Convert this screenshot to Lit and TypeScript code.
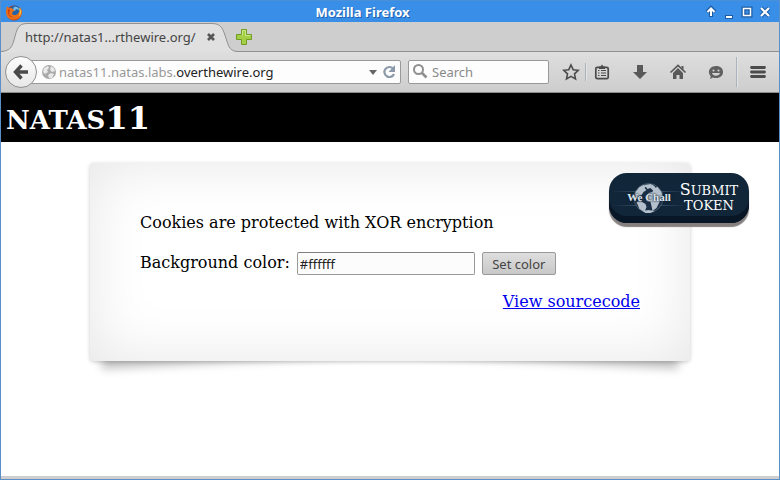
import { LitElement, html, css, svg } from "lit";
import { customElement, property } from "lit/decorators.js";

const globeLand = svg`
  <path d="M2 9 6 4l4-2 3 1-2 2 2 2-3 2-2 3-3 1-1 3-3-1zM3 19l4-1 5 3 1 3-2 5-5-3zM11 2l6-1 4 2 1 3-3 1-2-2-3 1zM20 5l4-1 4 5 1 5-2 1-1 4-3 6-4 3-1-5-1-4-4-1-1-4 3-4 4-1zM9 28l6-1 6 1-4 2h-5z"/>`;

const icons: Record<string, unknown> = {
  firefox: svg`
    <circle cx="9" cy="10" r="7.500" fill="#b8330f"/>
    <circle cx="10" cy="8.500" r="6" fill="#2463a6"/>
    <path d="M9 4c3-1 5 1 5 3l-3-1-1 2-2-1z" fill="#77bde9"/>
    <path d="M2 3l2 2.500c2-1 4 0 4 1l2 1-2 1-1 2c1 2 4 2 6 0 2-2 2-4.500 1-6.500 3 2 4 5.500 2 8.500-2 4-6 5-10 4C1 15 0 9 2 3z" fill="#e8701a"/>
    <path d="M14 4.500c3 3 2 7 0 9 1-3 1-6 0-9z" fill="#ffdc4b"/>
    <path d="M3 6l2 1-1 3c0 3 3 4 5 4-4 1-7-2-6-8z" fill="#d13c0c"/>`,
  shade: svg`<path d="M9 14V7M5 9l4-4 4 4" fill="none" stroke="#1c5ca6" stroke-width="4"/><path d="M9 13V7M5.500 9 9 5.500 12.500 9" fill="none" stroke="#fff" stroke-width="2"/>`,
  minimize: svg`<path d="M5 12h8v4H5z" fill="#1c5ca6"/><path d="M6 13h6v2H6z" fill="#fff"/>`,
  maximize: svg`<path d="M5.500 5.500h7v7h-7z" fill="none" stroke="#1c5ca6" stroke-width="4"/><path d="M5.500 5.500h7v7h-7z" fill="none" stroke="#fff" stroke-width="1.500"/>`,
  close: svg`<path d="M5 5l8 8M13 5l-8 8" stroke="#1c5ca6" stroke-width="4"/><path d="M5 5l8 8M13 5l-8 8" stroke="#fff" stroke-width="2.200"/>`,
  tabClose: svg`<path d="M6 6l6 6M12 6l-6 6" stroke="#555" stroke-width="2.600"/>`,
  plus: svg`<path d="M6.500 1.500h5v5h5v5h-5v5h-5v-5h-5v-5h5z" fill="#a4cf45" stroke="#6f9c24"/><path d="M7.500 7.500v-5h3v5h5" fill="none" stroke="#cbe88a"/>`,
  back: svg`<path d="M9.500 2.500 3.500 9l6 6.500M4 9h12" fill="none" stroke="#4a4a4a" stroke-width="3.400"/>`,
  world: svg`<circle cx="9" cy="9" r="7" fill="#aaa"/><path d="M4 5l4-2 1 2-2 2 1 2-3 2-2-2zM11 3l3 2 1 3-3 1-2-2zM8 12l3-2 3 1-2 4-3 0z" fill="#e9e9e9"/>`,
  drop: svg`<path d="M5 7h8l-4 5z" fill="#666"/>`,
  reload: svg`<path d="M13 5.500A5 5 0 1 0 14 11" fill="none" stroke="#8b99a8" stroke-width="2.200"/><path d="M15 2v7H8.500z" fill="#8b99a8"/>`,
  search: svg`<circle cx="6.500" cy="6.500" r="4.500" fill="none" stroke="#8f8f8f" stroke-width="2"/><path d="M10 10l4.500 4.500" stroke="#8f8f8f" stroke-width="2.600"/>`,
  star: svg`<path d="M9 2l2.200 4.700 5 .6-3.700 3.500 1 5.100L9 13.400l-4.500 2.500 1-5.100L1.800 7.300l5-.6z" fill="none" stroke="#4b4b4b" stroke-width="1.600"/>`,
  list: svg`<rect x="2.800" y="4.300" width="12.400" height="11.400" rx="1.500" fill="none" stroke="#4b4b4b" stroke-width="1.700"/><path d="M6 3.500h1.500L9 1.500l1.500 2H12V6H6z" fill="#4b4b4b"/><path d="M5 7.500h1.500M8 7.500h5M5 10h1.500M8 10h5M5 12.500h1.500M8 12.500h5" stroke="#4b4b4b" stroke-width="1.200"/>`,
  download: svg`<path d="M6 2h6v7h4l-7 7-7-7h4z" fill="#595959"/>`,
  home: svg`<path d="M1.500 9.500 9 2.500l7.500 7" fill="none" stroke="#595959" stroke-width="1.700"/><path d="M4 10l5-5 5 5v6h-3.500v-4h-3v4H4zM12.500 3h2v4l-2-2z" fill="#595959"/>`,
  chat: svg`<path d="M9 3c4.500 0 7 2.500 7 6s-2.500 6-7 6c-1 0-2 0-3-.5L3 16l.8-2.800C-.5 9 3 3 9 3z" fill="#606060"/><circle cx="6.500" cy="7.500" r="1" fill="#d4d4d4"/><circle cx="11.500" cy="7.500" r="1" fill="#d4d4d4"/><path d="M5 10h8c-1 3.500-7 3.500-8 0z" fill="#d4d4d4"/>`,
  menu: svg`<path d="M2.500 4.500h13M2.500 9h13M2.500 13.500h13" stroke="#4b4b4b" stroke-width="2.800" stroke-linecap="round"/>`,
};

@customElement("ui-icon")
export class UiIcon extends LitElement {
  @property() name = "";

  static styles = css`
    :host { display: inline-flex; flex: none; width: 18px; height: 18px; }
    svg { width: 100%; height: 100%; }
  `;

  render() {
    return html`<svg viewBox="0 0 18 18" aria-hidden="true">${icons[this.name]}</svg>`;
  }
}

@customElement("browser-chrome")
export class BrowserChrome extends LitElement {
  static styles = css`
    :host { display: block; font: 13px/18px "Noto Sans", sans-serif; color: #444; }
    * { box-sizing: border-box; }
    button { display: flex; align-items: center; justify-content: center; border: 0; padding: 0; background: none; font: inherit; color: inherit; }
    .title-bar { display: flex; align-items: center; height: 22px; padding: 0 5px 0 4px; background: #398ee7; border-top: 1px solid #4a90d9; }
    .title { flex: 1; text-align: center; font: bold 13px/18px "Noto Sans", sans-serif; color: #fff; text-shadow: 1px 1px 0 #1f62ad; }
    .tabs { display: flex; align-items: center; height: 30px; background: #cecece; border-bottom: 1px solid #919191; }
    .tab { position: relative; display: flex; align-items: center; width: 234px; height: 30px; padding: 0 14px 0 24px; }
    .tab-shape { position: absolute; top: 0; left: 0; width: 236px; height: 30px; }
    .tab-label { position: relative; flex: 1; white-space: nowrap; }
    .tab-close { position: relative; margin-right: 1px; }
    .new-tab { position: relative; }
    .nav { display: flex; align-items: center; height: 41px; padding: 0 12px 0 4px; background: linear-gradient(#dedede, #cdcdcd); border-bottom: 1px solid #8c8c8c; }
    .back { position: relative; flex: none; width: 32px; height: 32px; border: 1px solid #909090; border-radius: 50%; background: linear-gradient(#fdfdfd, #e8e8e8); }
    .field { display: flex; align-items: center; height: 24px; border: 1px solid #999; border-radius: 2px; background: #fdfdfd; }
    .url { flex: 1; min-width: 0; margin-left: -8px; padding: 0 2px 0 10px; }
    .address { flex: 1; margin-left: 1px; white-space: nowrap; overflow: hidden; color: #999; }
    .address b { font-weight: normal; color: #222; }
    .history { margin-right: -2px; }
    .search { width: 141px; margin-left: 7px; padding-left: 3px; }
    .search input { flex: 1; min-width: 0; border: 0; padding: 0 0 0 2px; background: none; font: inherit; outline: 0; }
    .search input::placeholder { color: #8a8a8a; opacity: 1; }
    .tools { display: flex; align-items: center; margin-left: 13px; }
    .tool { width: 18px; height: 18px; margin-right: 20px; }
    .tool.star { margin-right: 5px; }
    .tool.chat { margin-right: 11px; }
    .tool.menu { margin: 0; }
    .rule { width: 2px; height: 18px; margin-right: 6px; background: linear-gradient(90deg, #a9b3bd 50%, #e4e4e4 50%); }
    .rule.tall { height: 30px; margin-right: 11px; }
  `;

  render() {
    return html`
      <div class="title-bar">
        <ui-icon name="firefox"></ui-icon>
        <div class="title">Mozilla Firefox</div>
        ${["shade", "minimize", "maximize", "close"].map(
          (n) => html`<button aria-label=${n}><ui-icon name=${n}></ui-icon></button>`,
        )}
      </div>
      <div class="tabs">
        <div class="tab">
          <svg class="tab-shape" viewBox="0 0 236 30" aria-hidden="true">
            <path d="M0 30v-.500C9 29 11 25 13 18 16 7 17 1.500 26 1.500H211c9 0 11 5 14 15 3 9 4 13 11 13v.500z" fill="#e0e0e0" />
            <path d="M0 29.500C9 29 11 25 13 18 16 7 17 1.500 26 1.500H211c9 0 11 5 14 15 3 9 4 13 13 13" fill="none" stroke="#919191" />
          </svg>
          <span class="tab-label">http://natas1...rthewire.org/</span>
          <button class="tab-close" aria-label="Close tab"><ui-icon name="tabClose"></ui-icon></button>
        </div>
        <button class="new-tab" aria-label="New tab"><ui-icon name="plus"></ui-icon></button>
      </div>
      <div class="nav">
        <button class="back" aria-label="Back"><ui-icon name="back"></ui-icon></button>
        <div class="field url">
          <ui-icon name="world"></ui-icon>
          <span class="address">natas11.natas.labs.<b>overthewire.org</b></span>
          <button class="history" aria-label="History"><ui-icon name="drop"></ui-icon></button>
          <button aria-label="Reload"><ui-icon name="reload"></ui-icon></button>
        </div>
        <div class="field search">
          <ui-icon name="search"></ui-icon>
          <input type="search" placeholder="Search" aria-label="Search" />
        </div>
        <div class="tools">
          <button class="tool star" aria-label="Bookmark"><ui-icon name="star"></ui-icon></button>
          <span class="rule"></span>
          <button class="tool" aria-label="Bookmarks"><ui-icon name="list"></ui-icon></button>
          <button class="tool" aria-label="Downloads"><ui-icon name="download"></ui-icon></button>
          <button class="tool" aria-label="Home"><ui-icon name="home"></ui-icon></button>
          <button class="tool chat" aria-label="Chat"><ui-icon name="chat"></ui-icon></button>
          <span class="rule tall"></span>
          <button class="tool menu" aria-label="Menu"><ui-icon name="menu"></ui-icon></button>
        </div>
      </div>
    `;
  }
}

@customElement("natas-page")
export class NatasPage extends LitElement {
  static styles = css`
    :host { display: block; position: relative; z-index: 0; background: #fff; color: #000; font: 16px/19px "DejaVu Serif", serif; }
    * { box-sizing: border-box; }
    h1 { margin: 0; padding: 6px 5px 5px; background: #000; color: #fff; font-size: 32px; line-height: 38px; }
    .small { font-size: 26px; line-height: 26px; text-transform: uppercase; }
    .card { position: relative; display: flex; flex-direction: column; max-width: 600px; margin: 21px auto; padding: 50px; border-radius: 4px; box-shadow: 0 1px 4px rgba(0, 0, 0, 0.2); }
    .card::before, .card::after { content: ""; position: absolute; z-index: -2; bottom: 15px; left: 10px; width: 50%; height: 20%; box-shadow: 0 15px 10px rgba(0, 0, 0, 0.25); transform: rotate(-3deg); }
    .card::after { left: auto; right: 10px; transform: rotate(3deg); }
    .backing { position: absolute; inset: 0; z-index: -1; border-radius: 4px; background: #fff; box-shadow: inset 0 0 60px rgba(0, 0, 0, 0.1); }
    p { margin: 0 0 20px; }
    form { display: flex; align-items: flex-start; height: 23px; margin-bottom: 17px; }
    label { margin-right: 7px; line-height: 21px; }
    .color { width: 178px; height: 23px; padding: 0 2px; border: 1px solid #999; border-top-color: #808080; border-radius: 2px; background: #fcfcfc; color: #222; font: 13px "Noto Sans", sans-serif; }
    .set { width: 74px; height: 23px; margin-left: 7px; padding: 0; border: 1px solid #999; border-radius: 2px; background: linear-gradient(#dedede, #c8c8c8); color: #444; font: 13px "Noto Sans", sans-serif; }
    .source { align-self: flex-end; color: #00e; }
    .token { position: absolute; top: 80px; right: 30px; display: flex; align-items: center; width: 140px; height: 50px; padding: 0 4px 2px 16px; border-radius: 18px; background: #12263a; box-shadow: inset 0 -7px 0 #081626, 0 4px 1px #857f7f; color: #fff; text-decoration: none; }
    .logo { position: relative; flex: none; display: flex; align-items: center; justify-content: center; width: 48px; height: 32px; color: #dfe4ea; font: bold 11px/16px "Liberation Serif", serif; white-space: nowrap; text-shadow: 0 0 2px #12263a, 0 0 2px #12263a; }
    .logo svg { position: absolute; inset: 0; width: 100%; height: 100%; overflow: visible; }
    .logo span { position: relative; }
    .token-text { flex: 1; text-align: center; font-size: 13px; line-height: 15px; text-transform: uppercase; white-space: nowrap; }
    .initial { font-size: 16px; }
  `;

  render() {
    return html`
      <h1><span class="small">natas</span>11</h1>
      <div class="card">
        <div class="backing"></div>
        <p>Cookies are protected with XOR encryption</p>
        <form @submit=${(e: Event) => e.preventDefault()}>
          <label for="bgcolor">Background color:</label>
          <input class="color" id="bgcolor" name="bgcolor" .value=${"#ffffff"} />
          <button class="set">Set color</button>
        </form>
        <a class="source" href="#source">View sourcecode</a>
      </div>
      <a class="token" href="#token">
        <span class="logo">
          <svg viewBox="0 0 48 32" aria-hidden="true">
            <defs>
              <linearGradient id="ray">
                <stop offset="0" stop-color="#5f87a5" stop-opacity="0" />
                <stop offset="0.500" stop-color="#7fa3bd" />
                <stop offset="1" stop-color="#5f87a5" stop-opacity="0" />
              </linearGradient>
            </defs>
            <path d="M-14 10h76v1h-76zM-14 24h76v1h-76z" fill="url(#ray)" opacity="0.500" />
            <circle cx="23.500" cy="17" r="14.500" fill="#1b3044" stroke="#5c7085" stroke-width="0.700" />
            <g transform="translate(8.500 2)" fill="#b4c0cc">${globeLand}</g>
          </svg>
          <span>We Chall</span>
        </span>
        <span class="token-text"><span class="initial">S</span>ubmit<br />token</span>
      </a>
    `;
  }
}

@customElement("app-root")
export class AppRoot extends LitElement {
  static styles = css`
    :host { display: flex; flex-direction: column; box-sizing: border-box; min-height: 100vh; border: 1px solid #5a90c8; border-top: 0; background: #cecece; overflow: hidden; }
    natas-page { flex: 1; margin-bottom: 3px; }
  `;

  render() {
    return html`<browser-chrome></browser-chrome><natas-page></natas-page>`;
  }
}
